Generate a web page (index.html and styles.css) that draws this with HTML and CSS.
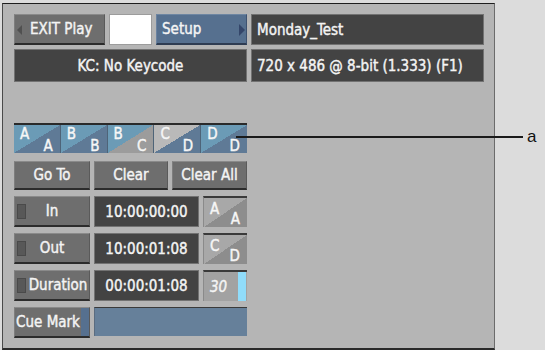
FILE: index.html
```html
<!DOCTYPE html>
<html>
<head>
<meta charset="utf-8">
<link rel="stylesheet" href="styles.css">
</head>
<body>
<div class="screen">
  <div class="panel">
    <div class="top">
      <div class="btn exit"><span class="arrow-left"></span>EXIT Play</div>
      <div class="white"></div>
      <div class="btn setup">Setup<span class="arrow-right"></span></div>
      <div class="field name">Monday_Test</div>
      <div class="field kc">KC: No Keycode</div>
      <div class="field res">720 x 486 @ 8-bit (1.333) (F1)</div>
    </div>
    <div class="left">
      <div class="strip">
        <div class="cell c-aa"><span class="t">A</span><span class="b">A</span></div>
        <div class="cell c-bb"><span class="t">B</span><span class="b">B</span></div>
        <div class="cell c-bc"><span class="t">B</span><span class="b">C</span></div>
        <div class="cell c-cd"><span class="t">C</span><span class="b">D</span></div>
        <div class="cell c-dd"><span class="t">D</span><span class="b">D</span></div>
      </div>
      <div class="btnrow">
        <div class="btn">Go To</div>
        <div class="btn">Clear</div>
        <div class="btn">Clear All</div>
      </div>
      <div class="tcrow">
        <div class="btn ind"><span class="led"></span>In</div>
        <div class="field tc">10:00:00:00</div>
        <div class="cell small"><span class="t">A</span><span class="b">A</span></div>
      </div>
      <div class="tcrow">
        <div class="btn ind"><span class="led"></span>Out</div>
        <div class="field tc">10:00:01:08</div>
        <div class="cell small"><span class="t">C</span><span class="b">D</span></div>
      </div>
      <div class="tcrow">
        <div class="btn ind dur"><span class="led"></span>Duration</div>
        <div class="field tc">00:00:01:08</div>
        <div class="fps"><span class="num">30</span><span class="bar"></span></div>
      </div>
      <div class="cuerow">
        <div class="btn cue"><span class="cuetext">Cue Mark</span><span class="cuestrip"></span></div>
        <div class="bluefield"></div>
      </div>
    </div>
  </div>
  <div class="callout"><span class="line"></span><span class="label">a</span></div>
</div>
</body>
</html>
```
FILE: styles.css
```css
html, body {
  margin: 0;
  padding: 0;
  background: #dcdcdc;
}
body {
  width: 545px;
  height: 350px;
  overflow: hidden;
}
.screen {
  position: relative;
  width: 545px;
  height: 350px;
  padding: 3px 0 0 2px;
  box-sizing: border-box;
}
.panel {
  width: 493px;
  height: 347px;
  box-sizing: border-box;
  background: #b5b5b5;
  border-top: 1px solid #1e1e1e;
  border-left: 1px solid #4a4a4a;
  border-right: 1px solid #6c6c6c;
  border-bottom: 2px solid #2a2a2a;
  padding: 10px 0 0 11px;
  font-family: "DejaVu Sans Condensed", sans-serif;
  font-weight: normal;
  font-size: 15px;
  color: #f4f4f4;
  -webkit-text-stroke: 0.4px #f4f4f4;
}
.top {
  display: grid;
  grid-template-columns: 91px 43px 91px 233px;
  grid-template-rows: 31px 33px;
  column-gap: 4px;
  row-gap: 4px;
}
.btn {
  position: relative;
  display: flex;
  align-items: center;
  justify-content: center;
  background: #6e6e6e;
  box-sizing: border-box;
  border-top: 1px solid #8a8a8a;
  border-left: 1px solid #7e7e7e;
  border-right: 1px solid #5a5a5a;
  border-bottom: 2px solid #2c2c2c;
  white-space: nowrap;
}
.exit {
  justify-content: flex-start;
  padding-left: 15px;
}
.arrow-left {
  position: absolute;
  left: 2px;
  top: 10px;
  width: 0;
  height: 0;
  border-top: 5px solid transparent;
  border-bottom: 5px solid transparent;
  border-right: 5px solid #505050;
}
.white {
  background: #ffffff;
  border: 1px solid #9c9c9c;
  box-sizing: border-box;
}
.setup {
  background: #56708f;
  border-top-color: #6e86a2;
  border-left-color: #6a82a0;
  border-right-color: #3e5270;
  border-bottom-color: #2e3c52;
  justify-content: flex-start;
  padding-left: 5px;
}
.arrow-right {
  position: absolute;
  right: 1px;
  top: 9px;
  width: 0;
  height: 0;
  border-top: 6px solid transparent;
  border-bottom: 6px solid transparent;
  border-left: 6px solid #34466a;
}
.field {
  display: flex;
  align-items: center;
  background: #434343;
  border: 1px solid #727272;
  box-sizing: border-box;
  white-space: nowrap;
}
.name, .res {
  padding-left: 5px;
}
.kc {
  grid-column: 1 / 4;
  justify-content: center;
}
.left {
  width: 233px;
  display: flex;
  flex-direction: column;
  margin-top: 41px;
}
.strip {
  display: grid;
  grid-template-columns: repeat(5, 1fr);
  column-gap: 1px;
  height: 30px;
  background: #4e6478;
  border-top: 2px solid #2a2a2a;
  box-sizing: border-box;
}
.cell {
  position: relative;
  font-size: 15px;
  line-height: 15px;
  color: #f8f8f8;
}
.cell .t {
  position: absolute;
  left: 6px;
  top: 2px;
}
.cell .b {
  position: absolute;
  right: 7px;
  bottom: -1px;
}
.c-aa, .c-bb, .c-dd {
  background: linear-gradient(to bottom right, #6b9bb6 50%, #5f7a96 50%);
}
.c-bc {
  background: linear-gradient(to bottom right, #6b9bb6 50%, #9c9c9c 50%);
}
.c-cd {
  background: linear-gradient(to bottom right, #b9b9b9 50%, #5f7a96 50%);
}
.btnrow {
  display: grid;
  grid-template-columns: 76px 74px 75px;
  column-gap: 4px;
  height: 29px;
  margin-top: 8px;
}
.tcrow {
  display: grid;
  grid-template-columns: 76px 105px 44px;
  column-gap: 4px;
  height: 31px;
  margin-top: 6px;
}
.ind .led {
  position: absolute;
  left: 2px;
  top: 7px;
  width: 9px;
  height: 15px;
  background: #585858;
  border: 1px solid #4a4a4a;
  box-sizing: border-box;
}
.dur {
  padding-left: 12px;
}
.tc {
  justify-content: center;
}
.small {
  background: linear-gradient(to bottom right, #a8a8a8 50%, #8d8d8d 50%);
  border-top: 2px solid #3a3a3a;
  border-left: 1px solid #8a8a8a;
  box-sizing: border-box;
}
.small .t {
  left: 6px;
  top: 4px;
}
.small .b {
  right: 7px;
  bottom: 0px;
}
.fps {
  display: flex;
  background: #a2a2a2;
  border-top: 2px solid #3a3a3a;
  border-left: 1px solid #8a8a8a;
  box-sizing: border-box;
}
.fps .num {
  flex: 1;
  display: flex;
  align-items: center;
  padding-left: 6px;
  font-style: italic;
  color: #f4f4f4;
}
.fps .bar {
  width: 8px;
  background: #90dcfa;
  margin-right: 1px;
}
.cuerow {
  display: grid;
  grid-template-columns: 76px 153px;
  column-gap: 4px;
  height: 31px;
  margin-top: 6px;
}
.cue {
  justify-content: flex-start;
  padding: 0;
}
.cuetext {
  flex: 1;
  text-align: center;
}
.cuestrip {
  align-self: stretch;
  width: 8px;
  background: #56708f;
}
.bluefield {
  background: #66809a;
  border-top: 1px solid #3a3a3a;
  border-left: 1px solid #5a6c80;
  height: 29px;
  box-sizing: border-box;
}
.callout {
  position: absolute;
  left: 236px;
  top: 129px;
  display: flex;
  align-items: center;
  -webkit-text-stroke: 0;
}
.line {
  width: 287px;
  height: 2px;
  background: #1a1a1a;
}
.label {
  margin-left: 4px;
  font-family: "Liberation Sans", Arial, sans-serif;
  font-size: 17px;
  color: #111;
  line-height: 16px;
}
```
